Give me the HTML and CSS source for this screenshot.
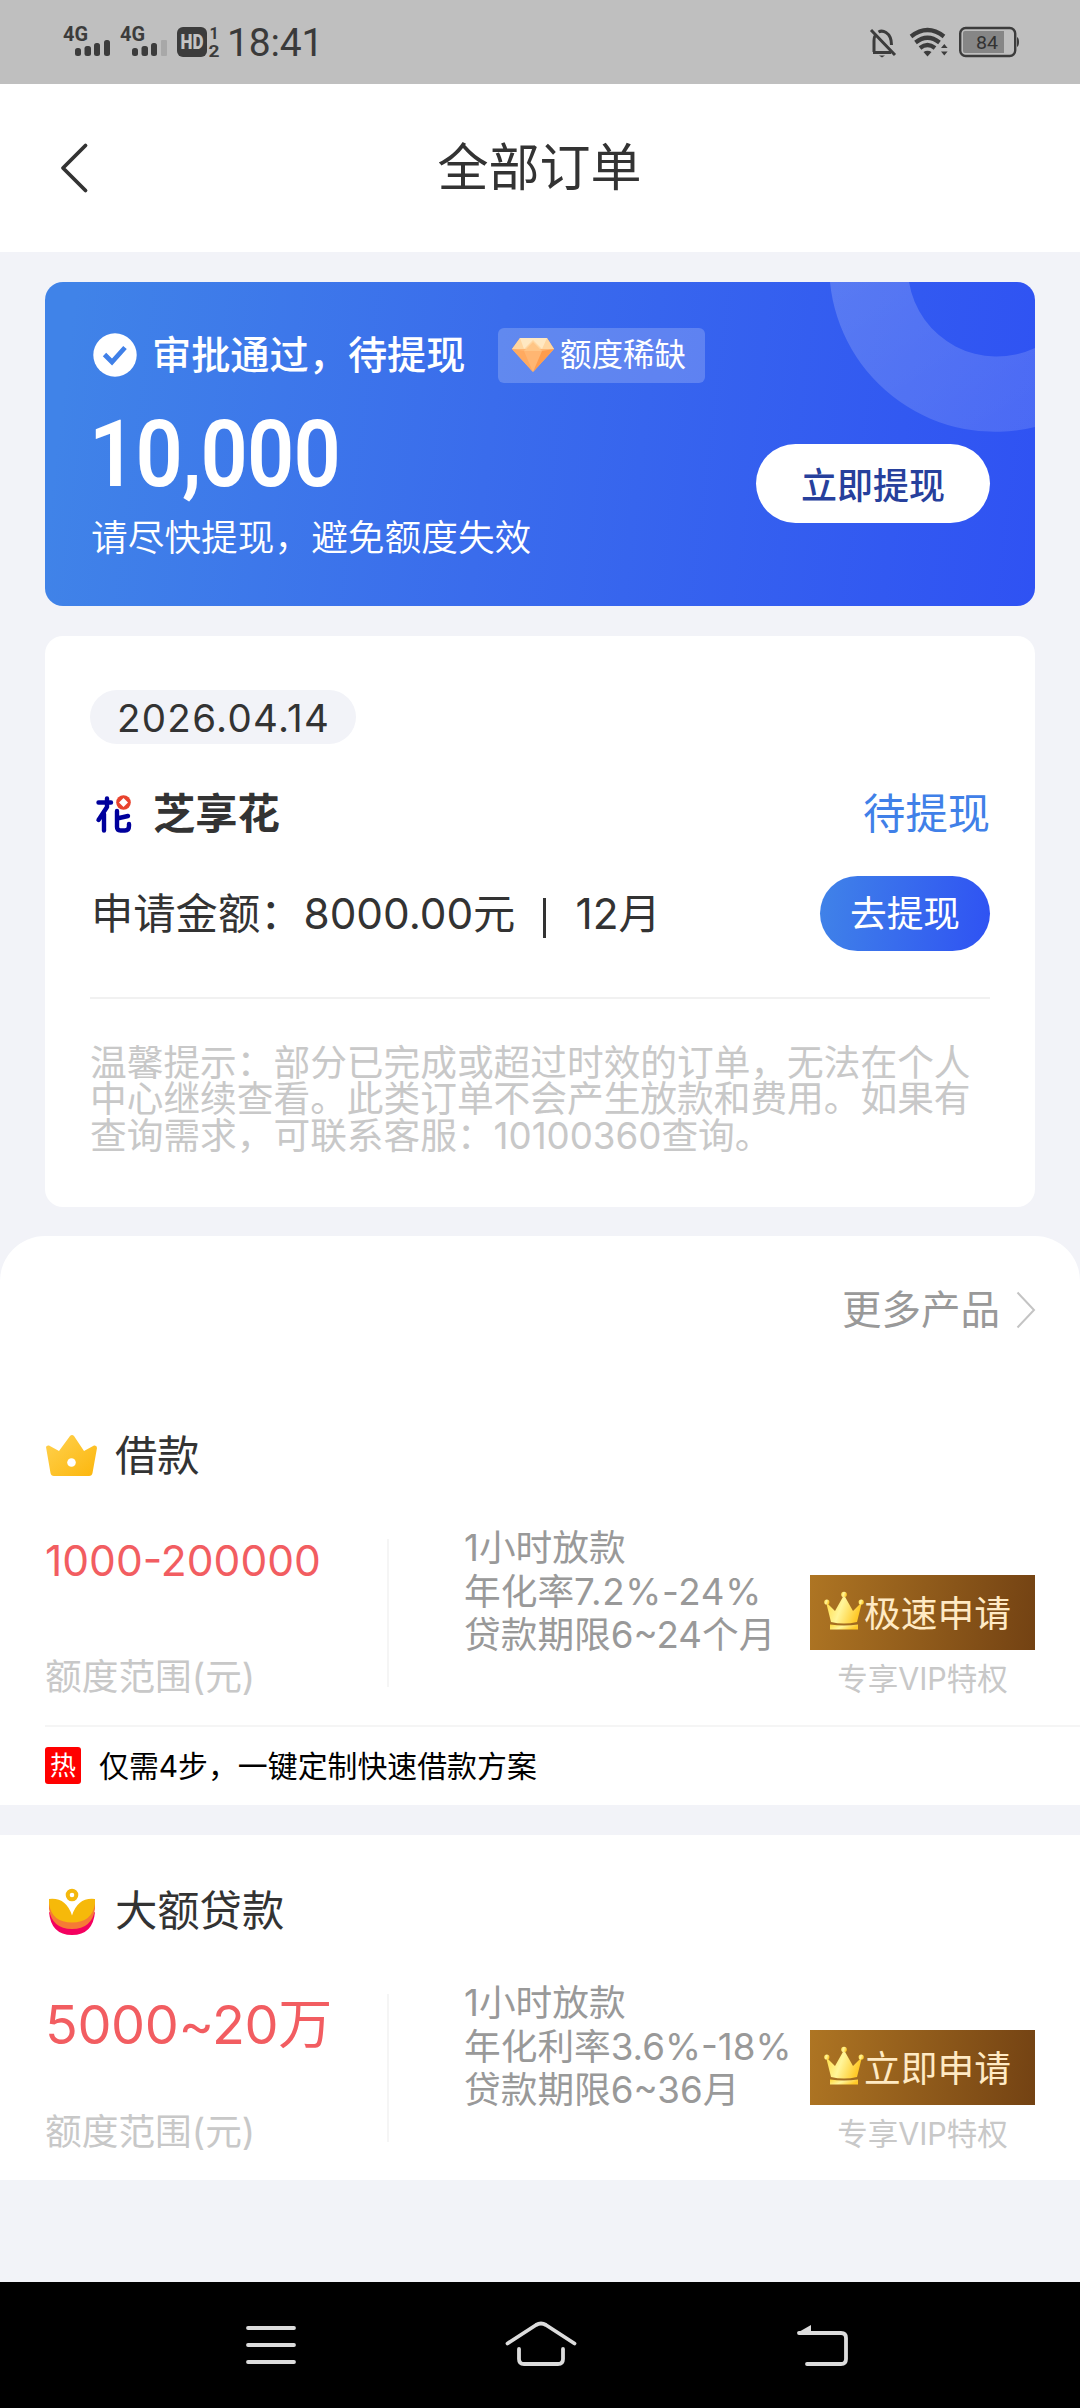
FILE: index.html
```html
<!DOCTYPE html>
<html lang="zh-CN">
<head>
<meta charset="utf-8">
<title>全部订单</title>
<link rel="stylesheet" href="styles.css">
</head>
<body>
<div class="status">
  <svg class="sig" width="48" height="34" viewBox="0 0 48 34"><text class="net" x="0" y="15.500" textLength="25" lengthAdjust="spacingAndGlyphs">4G</text><g class="dark"><rect x="12" y="23" width="6" height="8" rx="2.500"/><rect x="21.500" y="21" width="6.500" height="10" rx="2.500"/><rect x="31" y="18" width="6" height="13" rx="2.500"/><rect x="41" y="15" width="6" height="16" rx="2.500"/></g></svg>
  <svg class="sig sig2" width="48" height="34" viewBox="0 0 48 34"><text class="net" x="0" y="15.500" textLength="25" lengthAdjust="spacingAndGlyphs">4G</text><g class="dark"><rect x="12" y="23" width="6" height="8" rx="2.500"/><rect x="21.500" y="21" width="6.500" height="10" rx="2.500"/><rect x="31" y="18" width="6" height="13" rx="2.500"/><rect x="41" y="15" width="6" height="16" rx="1" fill="#a8a8a8"/></g></svg>
  <svg class="hd" width="44" height="32" viewBox="0 0 44 32"><rect class="dark" x="0" y="1" width="30" height="30" rx="6"/><text x="3.500" y="23" class="hdt" textLength="23" lengthAdjust="spacingAndGlyphs">HD</text><text x="32.500" y="12.500" class="sim">1</text><text x="31.500" y="30.500" class="sim" textLength="11" lengthAdjust="spacingAndGlyphs">2</text></svg>
  <span class="time">18:41</span>
  <span class="grow"></span>
  <svg class="bell" width="28" height="32" viewBox="0 0 28 32" fill="none" stroke="#3c3c3c" stroke-width="3"><path d="M2 3 26 28M4 25.500H22M5 25V14Q5 9 7 8M9.500 5Q13 3 17 5.500 22.500 9 22.500 18"/><path d="M10 28.500H16L13 30.500Z" fill="#3c3c3c" stroke="none"/></svg>
  <svg class="wifi" width="40" height="32" viewBox="0 0 40 32" fill="none" stroke="#3c3c3c" stroke-width="4.200"><path d="M2 10.500Q18.500-2.500 35 10.500M6.500 16.500Q18.500 7 30.500 16.500M11 22Q18.500 16 26 22"/><path d="M14.500 26Q18.500 23.500 22.500 26L18.500 30.500ZM32 22 35.300 18 38.600 22ZM32 25.500H38.600L35.300 29.500Z" fill="#3c3c3c" stroke="none"/></svg>
  <svg class="bat" width="62" height="32" viewBox="0 0 62 32"><rect x="1.200" y="2" width="55" height="28" rx="5.500" fill="none" stroke="#3c3c3c" stroke-width="2.400"/><path d="M6 5H45V27H6Q4 27 4 25V7Q4 5 6 5Z" fill="#868686"/><path d="M58 11Q60 12 60 16T58 21Z" fill="#3c3c3c"/><text x="17" y="23" class="batt" textLength="22" lengthAdjust="spacingAndGlyphs">84</text></svg>
</div>
<header class="head">
  <svg class="back" width="30" height="50" viewBox="0 0 30 50"><path d="M25.500 2.500 3 25 25.500 47.500" fill="none" stroke="#333" stroke-width="3.800" stroke-linecap="round" stroke-linejoin="round"/></svg>
  <h1>全部订单</h1>
</header>

<section class="hero">
  <svg class="ring" width="205" height="150" viewBox="0 0 205 150"><defs><linearGradient id="rg" x1="0" y1="0" x2="1" y2="1"><stop offset="0" stop-color="#fff" stop-opacity=".18"/><stop offset="1" stop-color="#fff" stop-opacity=".13"/></linearGradient></defs><path fill="url(#rg)" d="M0 0A166 166 0 0 0 205 145V66A89 89 0 0 1 79 0Z"/></svg>
  <div class="hero-top">
    <svg width="44" height="44" viewBox="0 0 44 44"><circle cx="22" cy="22" r="21.700" fill="#fff"/><path d="M11.500 21.500 19 29 32 14.500" fill="none" stroke="#4080e8" stroke-width="4.800"/></svg>
    <h2>审批通过，待提现</h2>
    <div class="scarce">
      <svg width="42" height="35" viewBox="0 0 42 35"><path d="M8 0H35L42 11 21 34 0 11Z" fill="#ffb672"/><path d="M8 0H35L42 11H0Z" fill="#ffd6a0"/><path d="M8 0 12 11 21 2 30 11 35 0Z" fill="#ffe8c2"/><path d="M12 13 21 4 30 13Z" fill="#ffc585"/><path d="M0 11 12 13 21 34Z" fill="#ffaa60"/><path d="M42 11 30 13 21 34Z" fill="#ff9c4c"/></svg>
      <span>额度稀缺</span>
    </div>
  </div>
  <div class="amount">10,000</div>
  <p class="hurry">请尽快提现，避免额度失效</p>
  <button class="take">立即提现</button>
</section>

<section class="order">
  <div class="date">2026.04.14</div>
  <div class="row name-row">
    <svg class="logo" width="36" height="40" viewBox="0 0 36 40"><g fill="none" stroke="#00009c" stroke-width="4.400" stroke-linecap="round" stroke-linejoin="round"><path d="M2.500 8.500H15M11 4.500V13L2.500 26M8 20V36.500M21 17V33Q21 36.500 24.500 36.500H29Q33 36.500 33 32V30M21 24.500 32 22"/></g><circle cx="27.500" cy="8.500" r="7.300" fill="#e8432e"/><path d="M27.500 4 32 8.500 27.500 13 23 8.500Z" fill="#fff"/></svg>
    <h3>芝享花</h3>
    <span class="state">待提现</span>
  </div>
  <div class="row sum-row">
    <div class="sum"><span>申请金额：</span><span class="val">8000.00元</span><i class="bar"></i><span class="months">12月</span></div>
    <button class="go">去提现</button>
  </div>
  <p class="tip">温馨提示：部分已完成或超过时效的订单，无法在个人<br>中心继续查看。此类订单不会产生放款和费用。如果有<br>查询需求，可联系客服：10100360查询。</p>
</section>

<section class="products">
  <div class="more"><span>更多产品</span><svg width="20" height="38" viewBox="0 0 20 38"><path d="M1.500 1.500 18 19 1.500 36.500" fill="none" stroke="#c4c4c4" stroke-width="2"/></svg></div>
  <article class="product">
    <div class="ptitle">
      <svg width="54" height="44" viewBox="0 0 54 44"><defs><linearGradient id="cg" x1="0" y1="0" x2="1" y2="1"><stop offset="0" stop-color="#ffd250"/><stop offset="1" stop-color="#fcb60c"/></linearGradient></defs><path d="M1 13Q1.500 11 4 11.500L14 17 25 2Q27 0 29 2L39 17 49 11.500Q52 11 52 14L47.500 39Q47 42 44 42H9Q6 42 5.500 39Z" fill="url(#cg)"/><circle cx="26.500" cy="28.500" r="4.300" fill="#fff"/></svg>
      <span>借款</span>
    </div>
    <div class="pbody">
      <div class="range"><strong>1000-200000</strong><small>额度范围(元)</small></div>
      <div class="terms">1小时放款<br>年化率<span class="rate">7.2%-24%</span><br>贷款期限6~24个月</div>
      <div class="act">
        <button class="apply"><svg width="40" height="40" viewBox="0 0 40 40"><defs><linearGradient id="kg" x1="0" y1="0" x2="1" y2=".3"><stop offset="0" stop-color="#ffd83a"/><stop offset=".5" stop-color="#fff59a"/><stop offset="1" stop-color="#ffc928"/></linearGradient></defs><g fill="url(#kg)"><path d="M2 11 11 20 20 4 29 20 38 11 33 31Q20 34 7 31Z"/><path d="M6 33.500Q20 35.500 34 33.500V38.500H6Z"/><circle cx="2.800" cy="11" r="2.600"/><circle cx="20" cy="3.500" r="2.800"/><circle cx="37.200" cy="11" r="2.600"/></g></svg><span>极速申请</span></button>
        <small>专享VIP特权</small>
      </div>
    </div>
    <div class="hot"><b>热</b><span>仅需4步，一键定制快速借款方案</span></div>
  </article>
  <article class="product second">
    <div class="ptitle">
      <svg width="54" height="52" viewBox="0 0 54 52"><path d="M4 27Q6 50 27 50T50 27L27 38Z" fill="#f4005f"/><path d="M4 18V24Q7 44 27 44T50 24V18L27 34Z" fill="#f67a35"/><path d="M4 14Q21 12 27 30.500 33 12 50 14V19Q47 37.500 27 37.500T4 19Z" fill="#f6b90a"/><circle cx="27" cy="10" r="4.300" fill="#fff" stroke="#f4b80c" stroke-width="4"/></svg>
      <span>大额贷款</span>
    </div>
    <div class="pbody">
      <div class="range big"><strong>5000~20万</strong><small>额度范围(元)</small></div>
      <div class="terms">1小时放款<br>年化利率3.6%-18%<br>贷款期限6~36月</div>
      <div class="act">
        <button class="apply"><svg width="40" height="40" viewBox="0 0 40 40"><g fill="url(#kg)"><path d="M2 11 11 20 20 4 29 20 38 11 33 31Q20 34 7 31Z"/><path d="M6 33.500Q20 35.500 34 33.500V38.500H6Z"/><circle cx="2.800" cy="11" r="2.600"/><circle cx="20" cy="3.500" r="2.800"/><circle cx="37.200" cy="11" r="2.600"/></g></svg><span>立即申请</span></button>
        <small>专享VIP特权</small>
      </div>
    </div>
  </article>
</section>

<nav class="nav">
  <svg width="52" height="40" viewBox="0 0 52 40"><path d="M3 3H49M3 20H49M3 37H49" stroke="#dcdcdc" stroke-width="3.800" stroke-linecap="round"/></svg>
  <svg class="home" width="72" height="46" viewBox="0 0 72 46"><path d="M2.500 21.500 31 3Q36 0 41 3L69.500 21.500M14 27V37Q14 42 19 42H53Q58 42 58 37V27" fill="none" stroke="#dcdcdc" stroke-width="3.800" stroke-linecap="round"/></svg>
  <svg width="54" height="44" viewBox="0 0 54 44"><path d="M3 10H45Q50 10 50 15V36Q50 41 45 41H11" fill="none" stroke="#dcdcdc" stroke-width="3.800" stroke-linecap="round"/><path d="M1 10 15 2V10Z" fill="#dcdcdc"/></svg>
</nav>
</body>
</html>
```
FILE: styles.css
```css
* { box-sizing: border-box; margin: 0; padding: 0; }
body {
  width: 1080px;
  height: 2408px;
  display: flex;
  flex-direction: column;
  background: #f2f3f8;
  color: #333;
  font-family: Inter, "Noto Sans CJK SC", sans-serif;
  font-weight: 400;
  overflow: hidden;
}
svg { display: block; flex: none; overflow: visible; }
button { border: 0; font: inherit; display: flex; align-items: center; justify-content: center; white-space: nowrap; }
h1, h2, h3 { font-weight: 400; white-space: nowrap; }

/* status bar */
.status { height: 84px; flex: none; background: #bfbfbf; display: flex; align-items: flex-start; padding: 25px 60px 0 63px; }
.sig2 { margin-left: 9px; }
.hd { margin: 1px 0 0 9px; }
.dark { fill: #3c3c3c; }
.net { font: 700 20px Roboto, sans-serif; fill: #3c3c3c; }
.hdt { font: 900 20px Roboto, sans-serif; fill: #c4c4c4; }
.sim { font: 700 16px Roboto, sans-serif; fill: #3c3c3c; }
.time { font: 400 39px/36px Roboto, sans-serif; color: #3a3a3a; margin-left: 6px; letter-spacing: -.2px; }
.grow { flex: 1; }
.bell { margin: 2px 12px 0 0; }
.wifi { margin: 1px 10px 0 0; }
.bat { margin-top: 1px; margin-right: -1px; }
.batt { font: 400 19px Roboto, sans-serif; fill: #333; }

/* title bar */
.head { height: 168px; flex: none; background: #fff; display: flex; align-items: center; padding: 0 60px; }
.head h1 { flex: 1; text-align: center; font-size: 51px; line-height: 60px; padding-right: 31px; }

/* approval banner */
.hero {
  position: relative;
  height: 324px;
  flex: none;
  margin: 30px 45px 0;
  padding: 46px 45px 0 48px;
  border-radius: 18px;
  overflow: hidden;
  color: #fff;
  background: linear-gradient(97deg, #4083e8 3%, #3a6cec 45%, #2f52f3 100%);
}
.ring { position: absolute; right: 0; top: 0; }
.hero-top { display: flex; align-items: center; height: 54px; }
.hero-top h2 { font-size: 39.200px; line-height: 54px; font-weight: 500; margin-left: 15px; width: 346px; }
.scarce { width: 207px; height: 55px; border-radius: 6px; background: rgba(255,255,255,.2); display: flex; align-items: center; padding-left: 14px; gap: 6px; font-size: 31.500px; line-height: 50px; white-space: nowrap; }
.amount { font: 600 92px/90px Roboto, sans-serif; letter-spacing: -.9px; margin: 28px 0 0 -4px; height: 90px; width: 300px; transform: scaleX(.9); transform-origin: left; }
.hurry { font-size: 36.700px; line-height: 50px; margin: 13px 0 0 -2px; white-space: nowrap; font-weight: 350; }
.take { position: absolute; right: 45px; top: 162px; width: 234px; height: 79px; border-radius: 40px; background: #fff; color: #27409c; font-size: 36px; font-weight: 500; padding-bottom: 2px; }

/* order card */
.order { height: 571px; flex: none; margin: 30px 45px 0; padding: 54px 45px 0; background: #fff; border-radius: 18px; }
.date { width: 266px; height: 54px; border-radius: 27px; background: #f2f3f8; font-size: 38.500px; line-height: 56px; padding-left: 27px; letter-spacing: 1.300px; white-space: nowrap; }
.row { display: flex; align-items: center; }
.name-row { height: 60px; margin-top: 40px; }
.logo { margin-left: 6px; }
.name-row h3 { font-size: 42.300px; font-weight: 700; line-height: 60px; margin-left: 21px; flex: 1; }
.state { font-size: 42.300px; color: #4080e8; line-height: 60px; }
.sum-row { height: 75px; margin-top: 32px; justify-content: space-between; font-size: 42.300px; line-height: 62px; }
.sum { display: flex; align-items: center; white-space: nowrap; padding-left: 1px; }
.val { margin-left: 1px; }
.bar { width: 3px; height: 40px; margin: 8px 29px 0 28px; background: #333; }
.go { width: 170px; height: 75px; border-radius: 38px; background: linear-gradient(97deg, #4083e8, #2f52f3); color: #fff; font-size: 36.700px; }
.tip { margin-top: 46px; border-top: 2px solid #f1f1f1; padding-top: 46px; color: #c8c8c8; font-size: 36.700px; line-height: 36.400px; white-space: nowrap; }

/* products */
.products { margin-top: 29px; flex: none; height: 944px; background: #fff; border-radius: 45px 45px 0 0; }
.more { height: 149px; display: flex; align-items: center; justify-content: flex-end; gap: 16px; padding: 0 44px 2px 0; font-size: 39.500px; line-height: 60px; color: #999; }
.product { height: 420px; padding-left: 45px; }
.ptitle { height: 100px; padding-top: 41px; display: flex; align-items: center; gap: 16px; font-size: 42.300px; line-height: 60px; }
.pbody { height: 240px; padding-top: 54px; display: flex; }
.range { width: 344px; height: 148px; border-right: 2px solid #f5f5f5; display: flex; flex-direction: column; white-space: nowrap; }
.range strong { font-weight: 400; font-size: 42.500px; color: #f25d61; line-height: 44px; }
.range small { font-size: 36.700px; line-height: 50px; color: #c8c8c8; margin-top: 69px; }
.range.big strong { font-size: 54px; line-height: 62px; letter-spacing: -.4px; }
.range.big small { margin-top: 51px; }
.terms { margin: -13px 0 0 75px; width: 346px; font-size: 36.700px; line-height: 43.500px; color: #999; white-space: nowrap; }
.rate { letter-spacing: .7px; }
.act { width: 225px; margin-top: 36px; display: flex; flex-direction: column; align-items: center; }
.apply { width: 225px; height: 75px; background: linear-gradient(97deg, #ae7523, #734213); color: #ffeac4; font-size: 36.700px; padding: 0 10px 3px 0; }
.act small { font-size: 30.500px; line-height: 44px; color: #c8c8c8; margin-top: 7px; }
.hot { height: 80px; border-top: 2px solid #f5f5f5; display: flex; align-items: center; font-size: 29.900px; color: #000; white-space: nowrap; gap: 18px; padding-bottom: 2px; }
.hot span { padding-bottom: 3px; }
.hot b { width: 36px; height: 37px; border-radius: 3px; background: #f00; color: #fff; font-weight: 400; font-size: 26px; line-height: 37px; text-align: center; }
.second { height: 375px; border-top: 30px solid #f2f3f8; padding-top: 5px; }

/* system navigation */
.nav { height: 126px; flex: none; margin-top: auto; background: #000; display: flex; align-items: center; justify-content: space-between; padding: 0 230px 0 245px; }
.home { margin-right: 12px; }
```
